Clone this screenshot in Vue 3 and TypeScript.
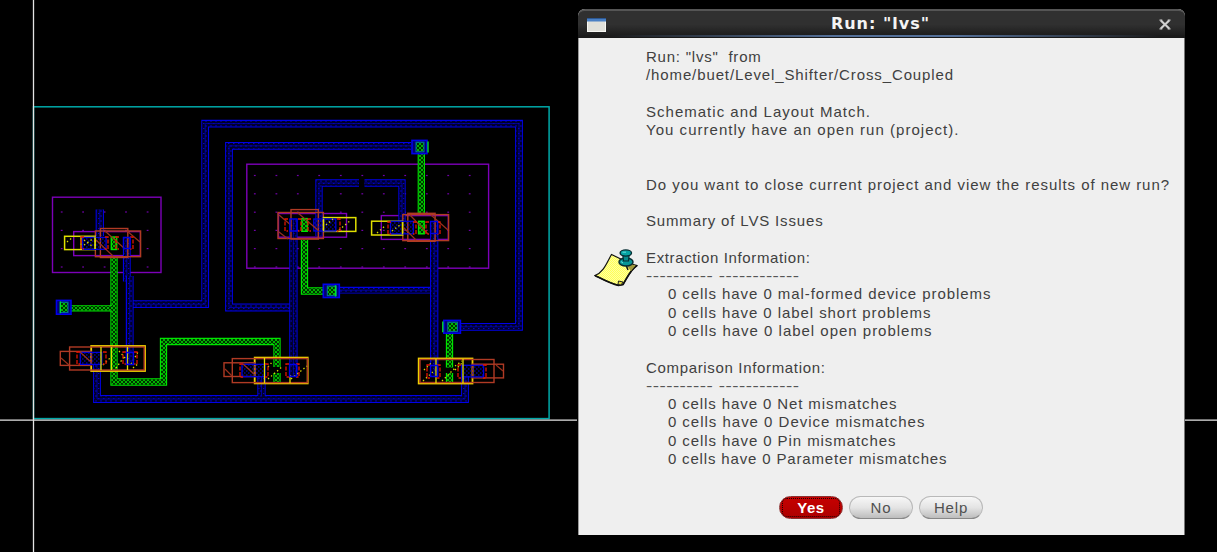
<script setup lang="ts">
interface Wire { net: 'metal' | 'poly'; d: string; w: number }
interface Box { kind: string; x: number; y: number; w: number; h: number }
interface Line { text: string; width: number; indent?: boolean; dash?: boolean }

const wires: Wire[] = [
  { net: 'poly', d: 'M114 257V382H163.5V341.5H277V367', w: 6.5 },
  { net: 'poly', d: 'M71 308.3H112', w: 5.5 },
  { net: 'poly', d: 'M277 373V382.5', w: 6.5 },
  { net: 'poly', d: 'M304.5 240V291H323', w: 6.5 },
  { net: 'poly', d: 'M421.3 154V213', w: 6.5 },
  { net: 'poly', d: 'M449.5 333V367.5', w: 6.5 },
  { net: 'poly', d: 'M449.5 373V382', w: 6.5 },
  { net: 'metal', d: 'M131 304.2H205.2V123.6H519V326.8H461', w: 7 },
  { net: 'metal', d: 'M411 145.8H229V307.5H290', w: 7 },
  { net: 'metal', d: 'M319 236V183H359', w: 6.5 },
  { net: 'metal', d: 'M364.5 183H402V222', w: 6.5 },
  { net: 'metal', d: 'M339 290.2H431', w: 6 },
  { net: 'metal', d: 'M97 365V399H465V376', w: 7 },
  { net: 'metal', d: 'M261.5 377V396', w: 7.5 },
  { net: 'metal', d: 'M99.8 209.5V236', w: 7.5 },
  { net: 'metal', d: 'M126.8 237V281.5', w: 7 },
  { net: 'metal', d: 'M129.7 276V364', w: 7 },
  { net: 'metal', d: 'M293.4 219V376.5', w: 7.5 },
  { net: 'metal', d: 'M434.2 221V377', w: 7.5 },
]

const boxes: Box[] = [
  { kind: 'well', x: 52.5, y: 197.2, w: 108.5, h: 75.3 },
  { kind: 'well', x: 246.8, y: 164.2, w: 241.8, h: 104 },
  { kind: 'well', x: 73.7, y: 231.6, w: 66.6, h: 24 },
  { kind: 'well', x: 278.5, y: 213.5, w: 68, h: 23.7 },
  { kind: 'well', x: 381.3, y: 215.6, w: 67, h: 23.8 },
  { kind: 'implant', x: 95.4, y: 231, w: 45.2, h: 25.7 },
  { kind: 'implant', x: 100.4, y: 228.5, w: 27.4, h: 29 },
  { kind: 'implant', x: 278, y: 212.5, w: 45.4, h: 26 },
  { kind: 'implant', x: 291, y: 209.6, w: 27.3, h: 29.5 },
  { kind: 'implant', x: 402.8, y: 214.6, w: 45.8, h: 26 },
  { kind: 'implant', x: 407.8, y: 213.3, w: 27.3, h: 28 },
  { kind: 'active', x: 64.6, y: 236.3, w: 30.6, h: 13.3 },
  { kind: 'active', x: 323.5, y: 217.6, w: 32.3, h: 13.8 },
  { kind: 'active', x: 371.6, y: 221.2, w: 31, h: 13.8 },
  { kind: 'active wide', x: 91.2, y: 346, w: 53.8, h: 25 },
  { kind: 'active wide', x: 254.7, y: 357.6, w: 53, h: 25.8 },
  { kind: 'active wide', x: 418.7, y: 358.5, w: 53.8, h: 25 },
  { kind: 'implant', x: 69.6, y: 347, w: 74.6, h: 23 },
  { kind: 'implant', x: 60.3, y: 351.4, w: 31, h: 14 },
  { kind: 'implant', x: 232.3, y: 358.6, w: 75.2, h: 24 },
  { kind: 'implant', x: 224, y: 362.8, w: 31, h: 13.7 },
  { kind: 'implant', x: 420, y: 359.5, w: 74, h: 23 },
  { kind: 'implant', x: 472.5, y: 364.2, w: 31, h: 13.7 },
  { kind: 'gate', x: 82.6, y: 237.4, w: 23.5, h: 12 },
  { kind: 'gate', x: 313.8, y: 219, w: 22, h: 12 },
  { kind: 'gate', x: 390.5, y: 221.3, w: 22.8, h: 12.5 },
  { kind: 'gate', x: 80.3, y: 352.4, w: 21.5, h: 12 },
  { kind: 'gate', x: 242, y: 364.3, w: 23, h: 12.4 },
  { kind: 'gate', x: 461.6, y: 365.3, w: 22, h: 11.6 },
  { kind: 'contact', x: 111.3, y: 237, w: 5.4, h: 12.5 },
  { kind: 'contact', x: 301.8, y: 218.6, w: 5.6, h: 12.7 },
  { kind: 'contact', x: 418.6, y: 221.3, w: 5.6, h: 12.5 },
]

const vias = [
  { x: 56.5, y: 300.4, w: 14.5, h: 13.8, bar: 60.3 },
  { x: 412, y: 140.4, w: 15, h: 13.2, bar: 428 },
  { x: 323.3, y: 284.3, w: 16, h: 13.2, bar: 335.5 },
  { x: 443.8, y: 320.4, w: 16.6, h: 12.8, bar: 442.8 },
]

const gridDots = (xs: number[], ys: number[]) => xs.flatMap(x => ys.map(y => ({ x, y })))
const dots = [
  ...gridDots([61.7, 83.1, 104.6, 126, 147.6], [212, 230.4, 248.6, 267]),
  ...gridDots([254.8, 276.4, 297.8, 319.2, 340.8, 362.3, 383.8, 405.2, 426.8, 448.2, 469.7], [175.5, 193.8, 212.2, 230.4, 248.6, 267]),
]

const lines: Line[] = [
  { text: 'Run: "lvs"  from', width: 115.5 },
  { text: '/home/buet/Level_Shifter/Cross_Coupled', width: 308 },
  { text: '', width: 0 },
  { text: 'Schematic and Layout Match.', width: 225 },
  { text: 'You currently have an open run (project).', width: 313.5 },
  { text: '', width: 0 },
  { text: '', width: 0 },
  { text: 'Do you want to close current project and view the results of new run?', width: 524 },
  { text: '', width: 0 },
  { text: 'Summary of LVS Issues', width: 177.5 },
  { text: '', width: 0 },
  { text: 'Extraction Information:', width: 164.5 },
  { text: '---------- ------------', width: 122.8, dash: true },
  { text: '0 cells have 0 mal-formed device problems', width: 323.5, indent: true },
  { text: '0 cells have 0 label short problems', width: 263.5, indent: true },
  { text: '0 cells have 0 label open problems', width: 264.5, indent: true },
  { text: '', width: 0 },
  { text: 'Comparison Information:', width: 179.5 },
  { text: '---------- ------------', width: 122.8, dash: true },
  { text: '0 cells have 0 Net mismatches', width: 229.5, indent: true },
  { text: '0 cells have 0 Device mismatches', width: 257.5, indent: true },
  { text: '0 cells have 0 Pin mismatches', width: 228.5, indent: true },
  { text: '0 cells have 0 Parameter mismatches', width: 279.5, indent: true },
]

// Spread each message line to its fixed advance width.
const pen = document.createElement('canvas').getContext('2d')!
pen.font = '15px "Liberation Sans"'
const spacing = (l: Line) =>
  l.text ? `${((l.width - pen.measureText(l.text).width) / l.text.length).toFixed(3)}px` : '0'
</script>

<template>
  <main class="desktop">
    <svg class="layout" width="1217" height="552" viewBox="0 0 1217 552">
      <defs>
        <pattern id="metalFill" width="5" height="5" patternUnits="userSpaceOnUse">
          <rect width="5" height="5" fill="#000028" />
          <path d="M0 1H2M3 3.5H4.5" stroke="#0000c8" stroke-width="1" />
        </pattern>
        <pattern id="polyFill" width="4" height="4" patternUnits="userSpaceOnUse">
          <rect width="4" height="4" fill="#003000" />
          <path d="M0 0L4 4M4 0L0 4" stroke="#00d000" stroke-width="0.85" />
        </pattern>
        <pattern id="gateFill" width="4" height="4" patternUnits="userSpaceOnUse">
          <path d="M0 1H1.5M2 3H3.5" stroke="#0000e8" stroke-width="1.2" />
        </pattern>
      </defs>

      <rect class="boundary" x="33.5" y="106.8" width="515.6" height="311.8" />
      <rect v-for="(p, i) in dots" :key="'d' + i" class="dot" :x="p.x - 0.9" :y="p.y - 0.6" width="1.8" height="1.2" />
      <rect v-for="(b, i) in boxes.slice(0, 5)" :key="'w' + i" :class="b.kind" :x="b.x" :y="b.y" :width="b.w" :height="b.h" />

      <g v-for="(w, i) in wires" :key="'n' + i" class="wire" :class="w.net">
        <path class="edge" :d="w.d" :stroke-width="w.w + 0.8" />
        <path class="core" :d="w.d" :stroke-width="w.w - 1.6" />
        <path class="fill" :d="w.d" :stroke-width="w.w - 1.6" />
        <path v-if="w.net === 'metal'" class="mid" :d="w.d" />
      </g>

      <rect v-for="(b, i) in boxes.slice(5)" :key="'b' + i" :class="b.kind" :x="b.x" :y="b.y" :width="b.w" :height="b.h" />

      <path class="hatch" d="M96 240L113 256M105 231L125 249M127 231L140 242M279 215L292 226M279 232L288 239M298 213L319 231M403 227L416 240M410 215L428 234M431 215L448 230M61 358L69 365M80 352L91 362M225 369L232 376M243 364L254 374M496 365L503 371" />
      <path class="gateline" d="M95 237V249M81 237V249M323.5 219V231M402.5 222V234M101 347V370M111.5 347V370M127.5 347V370M264.5 358V383M290 375V383M436 359V383M463 359V383" />
      <path class="specks" d="M67 242l6-5M84 245l10-7M84 240l8 6M339 230l12-10M326 225l7-6M377 233l9-8M392 231l8-6M103 365l9-9M116 368l8-11M119 351l7 8M131 364l7-12M133 368l6-5M268 379l15-13M268 367l5-6M291 379l16-13M423 381l12-11M424 370l8-8M442 381l13-13M455 370l8-8M455 366l7-5" />
      <path class="bracket" d="M84 237h-3v12h3M105 237h3v12h-3M119 237h-3v12h3M130 237h3v12h-3M288 219h-3v12h3M298 219h3v12h-3M311 219h-3v12h3M337 219h3v12h-3M391 222h-3v12h3M413 222h3v12h-3M429 222h-3v12h3M437 222h3v12h-3M80 352h-3v12h3M103 352h3v12h-3M126 352h-3v12h3M134 352h3v12h-3M243 364h-3v13h3M265 364h3v13h-3M289 364h-3v13h3M296 364h3v13h-3M430 365h-3v13h3M437 365h3v13h-3M461 365h-3v13h3M483 365h3v13h-3" />
      <path class="terminal" d="M123.5 237.5h6.5v11h-6.5zM290 219h7v12h-7zM430.5 221.5h7v12h-7zM126.5 352.5h7v12h-7zM289.5 364.5h7v12h-7zM430.5 365.5h7v11h-7z" />

      <g v-for="(v, i) in vias" :key="'v' + i">
        <rect class="via" :x="v.x" :y="v.y" :width="v.w" :height="v.h" />
        <rect class="cut" :x="v.x + 4" :y="v.y + 1.8" :width="v.w - 7" :height="v.h - 3.6" />
        <path class="viabar" :d="`M${v.bar} ${v.y + 1}V${v.y + v.h - 1}`" />
      </g>

      <path class="axis" d="M33.5 0V552M0 420.2H577M1185 420.2H1217" />
    </svg>

    <section class="dialog">
      <header class="titlebar">
        <svg class="winicon" width="19" height="14" viewBox="0 0 19 14">
          <rect x="0.5" y="0.5" width="18" height="13" fill="#e0e0da" stroke="#f7f7f3" />
          <rect x="0" y="0" width="19" height="3.5" fill="#4a80c4" />
          <path d="M0 0.5H19" stroke="#2c5894" />
        </svg>
        <h1>Run: "lvs"</h1>
        <svg class="close" width="12" height="11" viewBox="0 0 12 11">
          <path d="M1.8 1.5L10.2 9.5M10.2 1.5L1.8 9.5" stroke="#d0d0d0" stroke-width="2.2" />
          <path d="M0.5 1.2H3.3M8.7 1.2H11.5M0.5 9.8H3.3M8.7 9.8H11.5" stroke="#d0d0d0" stroke-width="1.2" />
        </svg>
      </header>

      <div class="body">
        <svg class="note" width="44" height="38" viewBox="0 0 44 38">
          <defs>
            <pattern id="paper" width="2" height="2" patternUnits="userSpaceOnUse">
              <rect width="2" height="2" fill="#ffff58" />
              <path d="M0 0h1v1H0zM1 1h1v1H1z" fill="#ffffa0" />
            </pattern>
          </defs>
          <path d="M17.5 5.5C13 13 10 23 1 26.5C8 30 17 35 24.5 36.3L29 35.5C33 29 37 20 43 16.5L36 14.5Z" fill="url(#paper)" stroke="#111" stroke-width="1.2" />
          <path d="M1 26.5C8 30 17 35 24.5 36.3L29 35.5C34 27 37 20 43 16.5" fill="none" stroke="#111" stroke-width="1.8" />
          <path d="M33 17L38 15.5L41.5 16.5L37 22Z" fill="#a29a3c" />
          <path d="M24 35.5L24.5 32L29 33L27 36Z" fill="#e6e040" stroke="#222" stroke-width="1" />
          <path d="M32 16L34 21" stroke="#111" stroke-width="1.5" />
          <ellipse cx="32" cy="13" rx="7" ry="4" fill="#079696" stroke="#062d32" stroke-width="1.5" />
          <path d="M28.7 5H35.3L34.5 12H29.5Z" fill="#078b8b" stroke="#062d32" stroke-width="1.2" />
          <ellipse cx="31.8" cy="4" rx="5.7" ry="3.1" fill="#06a3a3" stroke="#062d32" stroke-width="1.4" />
          <path d="M28.5 3.2H32M27 12.5L29 14" stroke="#67dede" />
        </svg>
        <div class="message">
          <p
            v-for="(l, i) in lines"
            :key="i"
            :class="{ indent: l.indent, dash: l.dash }"
            :style="{ letterSpacing: spacing(l) }"
          >{{ l.text }}</p>
        </div>
      </div>

      <footer class="actions">
        <button class="primary">Yes</button>
        <button>No</button>
        <button>Help</button>
      </footer>
    </section>
  </main>
</template>

<style>
body { background: #000; overflow: hidden; }
</style>

<style scoped>
.desktop { position: relative; width: 1217px; height: 552px; overflow: hidden; background: #000; }
.layout { display: block; }
.boundary { fill: none; stroke: #00a8a8; stroke-width: 1.5; }
.axis { fill: none; stroke: #e4e4e4; stroke-width: 1.3; }
.dot { fill: #7000a8; }
.well { fill: none; stroke: #7d00b8; stroke-width: 1.4; }
.implant { fill: none; stroke: #b03a24; stroke-width: 1.4; }
.active { fill: none; stroke: #e0e000; stroke-width: 1.5; }
.active.wide { stroke: #f0d000; stroke-width: 1.8; }
.gate { fill: url(#gateFill); stroke: #0000dc; stroke-width: 1.3; }
.contact { fill: url(#polyFill); stroke: #00e600; stroke-width: 1.4; }
.wire path { fill: none; stroke-linejoin: miter; }
.wire .core { stroke: #000; }
.metal .edge { stroke: #0000e8; }
.metal .fill { stroke: url(#metalFill); }
.metal .mid { stroke: #0000b4; stroke-width: 0.8; }
.poly .edge { stroke: #00e400; }
.poly .fill { stroke: url(#polyFill); }
.hatch { fill: none; stroke: #98301c; stroke-width: 1.2; }
.gateline { fill: none; stroke: #e0e000; stroke-width: 1.3; }
.specks { fill: none; stroke: #dada00; stroke-width: 1.3; stroke-dasharray: 1.4 2.6; }
.bracket { fill: none; stroke: #e01400; stroke-width: 1.3; stroke-dasharray: 4 1.5; }
.terminal { fill: none; stroke: #0000e8; stroke-width: 1.3; }
.via { fill: #000070; stroke: #0000ec; stroke-width: 1.6; }
.cut { fill: url(#polyFill); stroke: #0070a0; stroke-width: 1; }
.viabar { stroke: #00dc30; stroke-width: 1.4; }

.dialog {
  position: absolute;
  left: 578px;
  top: 9px;
  width: 607px;
  height: 526px;
  box-sizing: border-box;
  display: flex;
  flex-direction: column;
  background: #efefef;
  border-radius: 7px 7px 0 0;
  font-family: "Liberation Sans", Arial, sans-serif;
  font-size: 15px;
  color: #404040;
  box-shadow: inset -1px 0 #777, inset 1px 0 #999;
}
.titlebar {
  flex: none;
  height: 29px;
  box-sizing: border-box;
  display: grid;
  grid-template-columns: 39px 1fr 39px;
  align-items: center;
  border-top: 2px solid #555;
  border-radius: 7px 7px 0 0;
  background:
    linear-gradient(90deg, #1b1b1b 5%, #536f98 42%, #536f98 62%, #1b1b1b 96%) 0 24px / 100% 2px no-repeat,
    linear-gradient(#303030 0 50%, #181818 100%);
}
.winicon { margin-left: 9px; margin-top: 0; }
.titlebar h1 {
  margin: -2px 2px 0 0;
  text-align: center;
  font: bold 16px/24px "DejaVu Sans", sans-serif;
  letter-spacing: 1px;
  color: #f4f4f4;
}
.close { justify-self: center; margin: 0 1px 0 0; }
.body { display: flex; height: 434px; flex: none; }
.note { flex: none; margin: 210.5px 8px 0 16px; }
.message { padding-top: 10px; }
.message p { margin: 0; height: 18.27px; line-height: 18.27px; white-space: pre; }
.message p.indent { padding-left: 21.9px; }
.message p.dash { transform: scaleX(1.25); transform-origin: left; color: #555; }
.actions { display: flex; gap: 6px; margin: 24px 0 0 201px; }
.actions button {
  width: 64px;
  height: 23px;
  padding: 0;
  border: 1px solid #b9b9b9;
  border-bottom-color: #888;
  border-radius: 11.5px;
  background: linear-gradient(#f7f7f7, #e4e4e4 50%, #bdbdbd);
  font: 15px/21px "Liberation Sans", Arial, sans-serif;
  letter-spacing: 0.8px;
  color: #505050;
}
.actions .primary {
  position: relative;
  border-color: #8c3030;
  background: linear-gradient(#c60000, #ad0000);
  font-weight: bold;
  letter-spacing: 0.5px;
  color: #fff;
}
.actions .primary::after {
  content: "";
  position: absolute;
  inset: 1px 2px;
  border: 1px dotted #200;
  border-radius: 5px;
}
</style>
